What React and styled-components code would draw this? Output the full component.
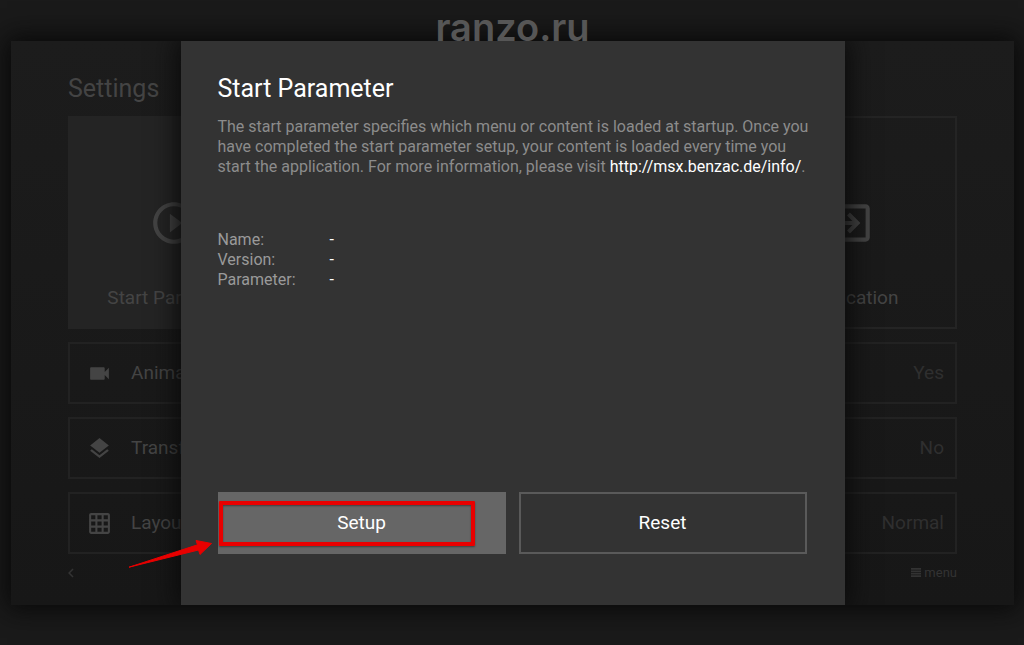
import React from 'react'
import styled, { createGlobalStyle } from 'styled-components'
import {
  MdPlayCircleOutline,
  MdExitToApp,
  MdVideocam,
  MdLayers,
  MdGridOn,
  MdChevronLeft,
} from 'react-icons/md'

const GlobalStyle = createGlobalStyle`
* {
  box-sizing: border-box;
}
body {
  margin: 0;
  background-color: #1a1a1a;
  font-family: Roboto, sans-serif;
}
button {
  font-family: inherit;
  cursor: pointer;
}
`;
const Page = styled.div`
padding: 0 10px 40px 11px;
`;
const Brand = styled.div`
position: relative;
z-index: 1;
height: 41px;
padding-top: 2px;
font-family: Inter, sans-serif;
font-size: 38px;
font-weight: 600;
line-height: 50px;
text-align: center;
color: #565656;
`;
const Screen = styled.div`
position: relative;
background: linear-gradient(#1c1c1c, #171717);
box-shadow: 0 0 24px 4px #080808;
`;
const Settings = styled.main`
padding: 0 57px;
`;
const Title = styled.h1`
margin: 0;
padding-top: 32px;
height: 75px;
font-size: 25px;
font-weight: 400;
line-height: 32px;
color: #444;
`;
const Tiles = styled.div`
display: grid;
grid-template-columns: repeat(4, 1fr);
gap: 13px;
`;
const Tile = styled.button`
height: 213px;
padding: 58px 0 0;
display: flex;
flex-direction: column;
align-items: center;
justify-content: flex-start;
gap: 38px;
border: 2px solid #242424;
background-color: ${props => props.$selected ? "#242424" : "transparent"};
color: #444;
font-size: 19px;
line-height: 24px;
white-space: nowrap;
svg {
  margin-top: 22px;
  flex: none;
}
`;
const Rows = styled.div`
display: flex;
flex-direction: column;
gap: 13px;
margin-top: 13px;
`;
const Row = styled.button`
height: 62px;
padding: 0 11px 0 17px;
display: flex;
align-items: center;
border: 2px solid #222;
background-color: transparent;
color: #444;
font-size: 19px;
line-height: 24px;
`;
const RowLabel = styled.span`
margin-left: 19px;
`;
const RowValue = styled.span`
margin-left: auto;
color: #2f2f2f;
`;
const BottomBar = styled.div`
height: 51px;
padding-bottom: 14px;
display: flex;
align-items: center;
justify-content: space-between;
color: #333;
`;
const BarButton = styled.button`
display: flex;
align-items: center;
gap: 3px;
padding: 0;
border: none;
background-color: transparent;
color: inherit;
font-size: 13px;
line-height: 16px;
`;
const BackButton = styled(BarButton)`
margin-left: -6px;
`;
const Dialog = styled.section`
position: absolute;
top: 0;
bottom: 0;
left: 16.9%;
right: 16.9%;
padding: 32px 38px 51px 37px;
display: flex;
flex-direction: column;
background-color: #333;
box-shadow: 0 0 24px 4px #0a0a0a;
/* the shadow only falls to the sides */
clip-path: inset(0 -60px);
`;
const DialogTitle = styled.h2`
margin: 0;
font-size: 25px;
font-weight: 400;
line-height: 32px;
color: #fff;
`;
const Description = styled.p`
margin: 12px -16px 0 0;
font-size: 16px;
line-height: 20px;
color: #8c8c8c;
`;
const InfoLink = styled.a`
color: #fff;
text-decoration: none;
`;
const Details = styled.dl`
margin: 53px 0 0;
display: grid;
grid-template-columns: 112px 1fr;
font-size: 16px;
line-height: 20px;
`;
const DetailName = styled.dt`
color: #9a9a9a;
`;
const DetailValue = styled.dd`
margin: 0;
color: #fff;
`;
const Actions = styled.div`
position: relative;
margin-top: auto;
display: grid;
grid-template-columns: 1fr 1fr;
gap: 13px;
`;
const ActionButton = styled.button`
height: 62px;
border: 2px solid ${props => props.$selected ? "#666" : "#5a5a5a"};
background-color: ${props => props.$selected ? "#666" : "transparent"};
color: #fff;
font-size: 19px;
line-height: 24px;
`;
const Highlight = styled.div`
position: absolute;
top: 9px;
left: 1px;
width: 256px;
height: 45px;
border: 4px solid #e80000;
border-radius: 1px;
box-shadow: 0 1px 2px #0006, inset 0 1px 2px #0006;
pointer-events: none;
`;
const Arrow = styled.svg`
position: absolute;
top: 46px;
left: -92px;
width: 90px;
height: 34px;
pointer-events: none;
`;

const settings = [
  { label: "Animations", value: "Yes", icon: MdVideocam },
  { label: "Transform", value: "No", icon: MdLayers },
  { label: "Layout", value: "Normal", icon: MdGridOn },
];

const App = () => {
  return (
    <>
      <GlobalStyle/>
      <Page>
        <Brand>ranzo.ru</Brand>
        <Screen>
          <Settings>
            <Title>Settings</Title>
            <Tiles>
              <Tile $selected>
                <MdPlayCircleOutline size={50}/>
                Start Parameter
              </Tile>
              <Tile aria-hidden="true"/>
              <Tile aria-hidden="true"/>
              <Tile>
                <MdExitToApp size={50}/>
                Application
              </Tile>
            </Tiles>
            <Rows>
              {settings.map(({ label, value, icon: Icon }) => (
                <Row key={label}>
                  <Icon size={25}/>
                  <RowLabel>{label}</RowLabel>
                  <RowValue>{value}</RowValue>
                </Row>
              ))}
            </Rows>
            <BottomBar>
              <BackButton aria-label="Back"><MdChevronLeft size={18}/></BackButton>
              <BarButton>
                <svg width="10" height="9" viewBox="0 0 10 9" fill="currentColor" aria-hidden="true">
                  <path d="M0 0h10v1.7H0zM0 2.4h10v1.7H0zM0 4.8h10v1.7H0zM0 7.2h10v1.7H0z"/>
                </svg>
                menu
              </BarButton>
            </BottomBar>
          </Settings>
          <Dialog role="dialog" aria-labelledby="dialog-title">
            <DialogTitle id="dialog-title">Start Parameter</DialogTitle>
            <Description>
              The start parameter specifies which menu or content is loaded at startup. Once you
              have completed the start parameter setup, your content is loaded every time you
              start the application. For more information, please visit{" "}
              <InfoLink href="http://msx.benzac.de/info/">http://msx.benzac.de/info/</InfoLink>.
            </Description>
            <Details>
              <DetailName>Name:</DetailName>
              <DetailValue>-</DetailValue>
              <DetailName>Version:</DetailName>
              <DetailValue>-</DetailValue>
              <DetailName>Parameter:</DetailName>
              <DetailValue>-</DetailValue>
            </Details>
            <Actions>
              <ActionButton $selected>Setup</ActionButton>
              <ActionButton>Reset</ActionButton>
              <Highlight/>
              <Arrow viewBox="0 0 90 34" aria-hidden="true">
                <path
                  d="M3 29.2 L71.5 6.8 L70 2.5 L85.5 5.5 L74 16.5 L72.5 12 Z"
                  fill="#e80000"
                  stroke="#e80000"
                  strokeWidth="1"
                  strokeLinejoin="round"
                />
              </Arrow>
            </Actions>
          </Dialog>
        </Screen>
      </Page>
    </>
  )
}
export default App;
